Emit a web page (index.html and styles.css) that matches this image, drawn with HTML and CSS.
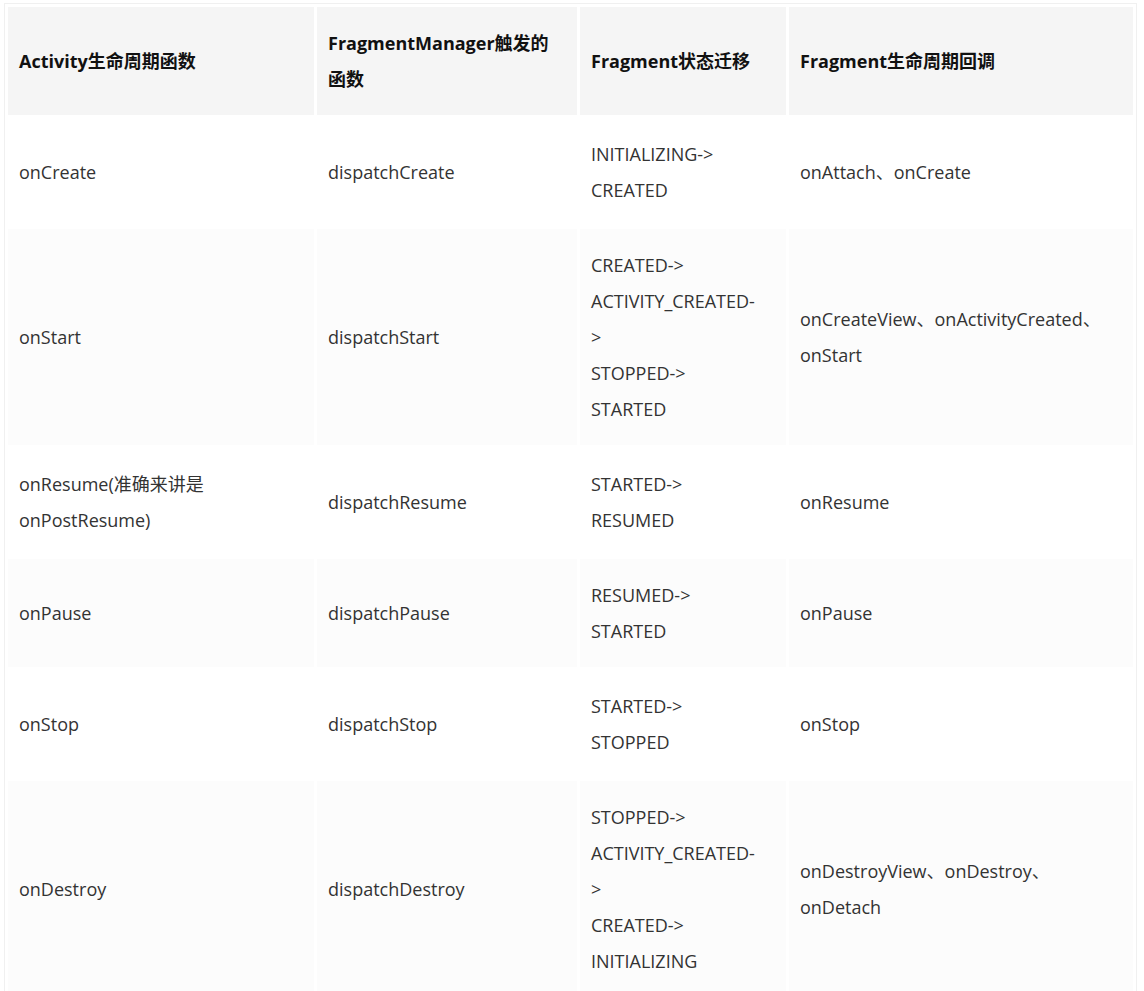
FILE: index.html
```html
<!DOCTYPE html>
<html lang="zh-CN">
<head>
<meta charset="utf-8">
<title>Fragment lifecycle</title>
<link rel="stylesheet" href="styles.css">
</head>
<body>
<div class="wrap">
<table class="lifecycle">
  <thead>
    <tr>
      <th class="c1">Activity生命周期函数</th>
      <th class="c2">FragmentManager触发的函数</th>
      <th class="c3">Fragment状态迁移</th>
      <th class="c4">Fragment生命周期回调</th>
    </tr>
  </thead>
  <tbody>
    <tr>
      <td>onCreate</td>
      <td>dispatchCreate</td>
      <td class="state">INITIALIZING-&gt;<br>CREATED</td>
      <td class="cb">onAttach、onCreate</td>
    </tr>
    <tr>
      <td>onStart</td>
      <td>dispatchStart</td>
      <td class="state">CREATED-&gt;<br>ACTIVITY_CREATED-&gt;<br>STOPPED-&gt;<br>STARTED</td>
      <td class="cb">onCreateView、onActivityCreated、onStart</td>
    </tr>
    <tr>
      <td>onResume(准确来讲是onPostResume)</td>
      <td>dispatchResume</td>
      <td class="state">STARTED-&gt;<br>RESUMED</td>
      <td class="cb">onResume</td>
    </tr>
    <tr>
      <td>onPause</td>
      <td>dispatchPause</td>
      <td class="state">RESUMED-&gt;<br>STARTED</td>
      <td class="cb">onPause</td>
    </tr>
    <tr>
      <td>onStop</td>
      <td>dispatchStop</td>
      <td class="state">STARTED-&gt;<br>STOPPED</td>
      <td class="cb">onStop</td>
    </tr>
    <tr>
      <td>onDestroy</td>
      <td>dispatchDestroy</td>
      <td class="state">STOPPED-&gt;<br>ACTIVITY_CREATED-&gt;<br>CREATED-&gt;<br>INITIALIZING</td>
      <td class="cb">onDestroyView、onDestroy、onDetach</td>
    </tr>
  </tbody>
</table>
</div>
</body>
</html>
```

FILE: styles.css
```css
html, body {
  margin: 0;
  padding: 0;
  background: #ffffff;
}

.wrap {
  padding: 3px 0 0 4px;
}

.lifecycle {
  width: 1133px;
  table-layout: fixed;
  border-collapse: separate;
  border-spacing: 3px;
  border: 1px solid #f0f0f0;
  font-family: "Open Sans", "Noto Sans CJK SC", sans-serif;
  font-size: 18px;
  line-height: 36px;
  color: #333333;
}

.lifecycle th,
.lifecycle td {
  box-sizing: border-box;
  padding: 18px 11px;
  text-align: left;
  vertical-align: middle;
  word-wrap: break-word;
}

.lifecycle th {
  background: #f5f5f5;
  color: #111111;
  font-weight: 700;
}

.lifecycle .c1 { width: 306px; }
.lifecycle .c2 { width: 260px; }
.lifecycle .c3 { width: 206px; }
.lifecycle .c4 { width: 344px; }

.lifecycle td.state {
  padding-right: 25px;
}

.lifecycle tbody tr:nth-child(odd) td {
  background: #ffffff;
}

.lifecycle tbody tr:nth-child(even) td {
  background: #fcfcfc;
}
```
